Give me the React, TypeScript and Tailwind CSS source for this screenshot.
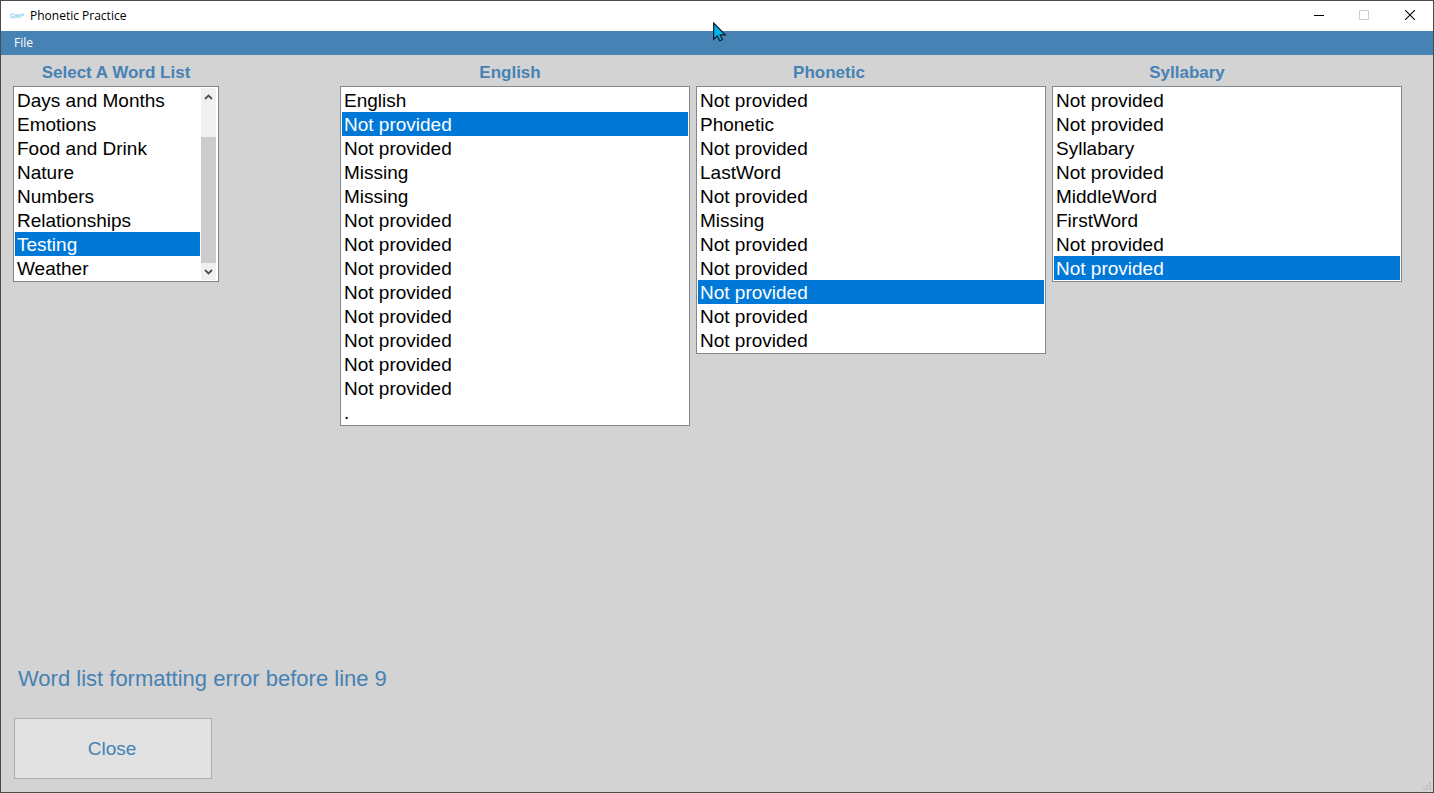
import { useState } from "react";

const wordLists = [
  "Days and Months",
  "Emotions",
  "Food and Drink",
  "Nature",
  "Numbers",
  "Relationships",
  "Testing",
  "Weather",
];

const NP = "Not provided";
const english = ["English", NP, NP, "Missing", "Missing", NP, NP, NP, NP, NP, NP, NP, NP, "."];
const phonetic = [NP, "Phonetic", NP, "LastWord", NP, "Missing", NP, NP, NP, NP, NP];
const syllabary = [NP, NP, "Syllabary", NP, "MiddleWord", "FirstWord", NP, NP];

interface ListBoxProps {
  id: string;
  items: string[];
  initial: number;
}

function ListBox({ id, items, initial }: ListBoxProps) {
  const [selected, setSelected] = useState(initial);
  return (
    <select
      id={id}
      size={items.length}
      value={selected}
      onChange={(e) => setSelected(Number(e.target.value))}
      className="block h-auto w-full min-w-0 flex-1 appearance-none overflow-hidden border-0 bg-white p-0 text-[19px] leading-6 text-black outline-none"
    >
      {items.map((item, i) => (
        <option
          key={i}
          value={i}
          className="block h-6 min-h-0 px-0.5 pt-0.5 pb-0 leading-[21px] checked:bg-[#0078d7]! checked:bg-linear-to-r checked:from-[#0078d7] checked:to-[#0078d7] checked:text-white!"
        >
          {item}
        </option>
      ))}
    </select>
  );
}

interface WordColumnProps extends ListBoxProps {
  title: string;
  labelClass: string;
}

function WordColumn({ title, labelClass, ...list }: WordColumnProps) {
  return (
    <section className="flex min-w-0 flex-col">
      <label htmlFor={list.id} className={`mb-px text-center text-[17px] leading-6 font-bold ${labelClass}`}>
        {title}
      </label>
      <div className="flex border border-[#828790] bg-white p-px">
        <ListBox {...list} />
      </div>
    </section>
  );
}

function ScrollBar() {
  return (
    <div className="mr-px flex w-[15px] shrink-0 flex-col bg-[#f0f0f0]">
      <button type="button" aria-label="Scroll up" className="flex h-[17px] items-center justify-center">
        <svg width="9" height="6" viewBox="0 0 9 6" fill="none" stroke="#505050" strokeWidth="1.8">
          <path d="M1 5 4.5 1.5 8 5" />
        </svg>
      </button>
      <div className="flex flex-1 flex-col justify-end">
        <div className="h-4/5 bg-[#cdcdcd]" />
      </div>
      <button type="button" aria-label="Scroll down" className="flex h-[17px] items-center justify-center">
        <svg width="9" height="6" viewBox="0 0 9 6" fill="none" stroke="#505050" strokeWidth="1.8">
          <path d="M1 1 4.5 4.5 8 1" />
        </svg>
      </button>
    </div>
  );
}

function TitleBar() {
  return (
    <header className="flex h-[30px] items-center bg-white pl-[9px] font-['Open_Sans','Noto_Sans',sans-serif] text-black">
      <svg width="14" height="8" viewBox="0 0 14 8" fill="none" stroke="#a5d8ee" strokeWidth="1.3" aria-hidden="true">
        <path d="M4 2.2H1.5L.8 3v1.5l.8 1H4V4M5 2.2l1 3 1-2.5 1 2.5 1-3M9.5 2.2l1.5 1.8 1.5-1.8M11 4l-1 2M12.5 2.2h1v2" />
      </svg>
      <h1 className="ml-1.5 text-[12px] leading-4">Phonetic Practice</h1>
      <div className="ml-auto flex h-7 self-start">
        <button type="button" aria-label="Minimize" className="flex w-[44px] items-center justify-center">
          <svg width="10" height="10" viewBox="0 0 10 10" shapeRendering="crispEdges">
            <path d="M0 5h10v1H0z" fill="#000" />
          </svg>
        </button>
        <button type="button" aria-label="Maximize" disabled className="flex w-[46px] items-center justify-center">
          <svg width="10" height="10" viewBox="0 0 10 10" fill="none" stroke="#cccccc">
            <path d="M.5.5h9v9h-9z" />
          </svg>
        </button>
        <button type="button" aria-label="Close window" className="flex w-[46px] items-center justify-center">
          <svg width="10" height="10" viewBox="0 0 10 10" fill="none" stroke="#000" strokeWidth="1.1">
            <path d="M0 0l10 10M10 0 0 10" />
          </svg>
        </button>
      </div>
    </header>
  );
}

export default function App() {
  return (
    <div className="relative flex min-h-screen flex-col border border-[#4a4a4a] bg-[#d3d3d3] font-['Liberation_Sans',Arial,sans-serif] text-[#4682b4]">
      <TitleBar />
      <nav className="flex h-6 items-center bg-[#4682b4] px-[9px] font-['Open_Sans','Noto_Sans',sans-serif] text-white">
        <button type="button" className="px-1 text-[12px] leading-4">
          File
        </button>
      </nav>

      <main className="flex flex-1 flex-col pt-1.5 pr-[31px] pb-[13px] pl-3">
        <div className="flex items-start">
          <section className="mr-[121px] flex w-[206px] shrink-0 flex-col">
            <label htmlFor="word-lists" className="mb-px text-center text-[17px] leading-6 font-bold">
              Select A Word List
            </label>
            <div className="flex gap-px border border-[#828790] bg-white p-px">
              <ListBox id="word-lists" items={wordLists} initial={6} />
              <ScrollBar />
            </div>
          </section>
          <div className="grid min-w-0 flex-1 grid-cols-3 items-start gap-1.5">
            <WordColumn id="english" title="English" labelClass="pr-2.5" items={english} initial={1} />
            <WordColumn id="phonetic" title="Phonetic" labelClass="pr-[84px]" items={phonetic} initial={8} />
            <WordColumn id="syllabary" title="Syllabary" labelClass="pr-20" items={syllabary} initial={7} />
          </div>
        </div>

        <p role="status" className="mt-auto mb-[25px] pl-[5px] text-[22px] leading-7">
          Word list formatting error before line 9
        </p>
        <button
          type="button"
          className="ml-px h-[61px] w-[198px] border border-[#adadad] bg-[#e1e1e1] pr-0.5 text-[19px] leading-6"
        >
          Close
        </button>
      </main>

      <svg className="absolute right-0.5 bottom-0.5" width="8" height="8" viewBox="0 0 8 8" fill="#bfbfbf" aria-hidden="true">
        <path d="M6 0h2v2H6zM3 3h2v2H3zM6 3h2v2H6zM0 6h2v2H0zM3 6h2v2H3zM6 6h2v2H6z" />
      </svg>
      <svg
        className="pointer-events-none absolute top-[21px] left-1/2 -ml-1"
        width="14"
        height="20"
        viewBox="0 0 14 20"
        fill="#00b7f0"
        stroke="#101820"
        strokeWidth="1.2"
        aria-hidden="true"
      >
        <path d="M.7 1v16.3l3.6-3.4 2.5 4.8 2.6-1.2-2.3-4.7h5.2z" />
      </svg>
    </div>
  );
}
